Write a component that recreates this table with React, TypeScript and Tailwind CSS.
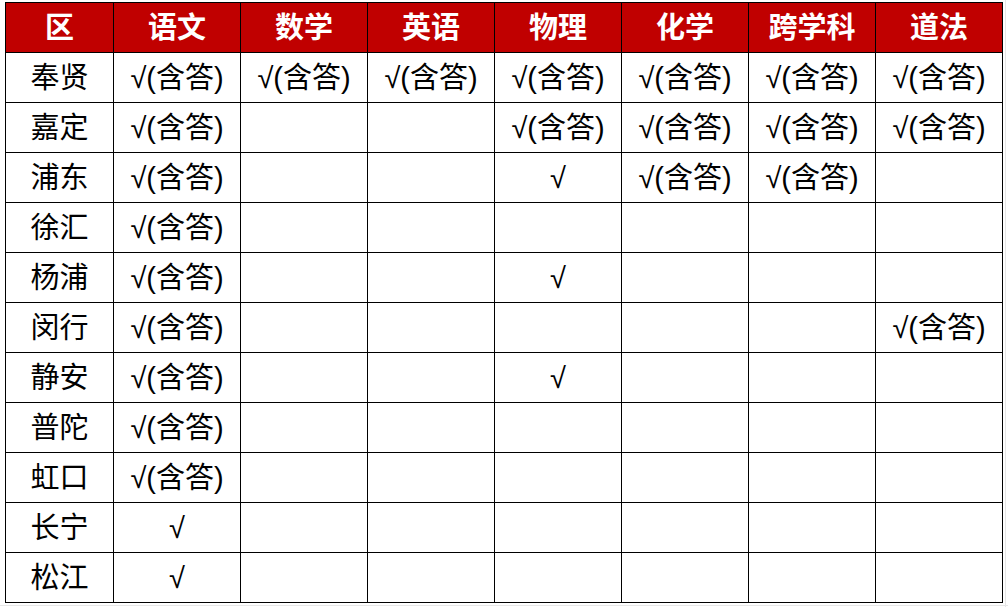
import React from "react";

const headers = ["区", "语文", "数学", "英语", "物理", "化学", "跨学科", "道法"];
const A = "√(含答)";
const C = "√";
const rows: [string, string[]][] = [
  ["奉贤", [A, A, A, A, A, A, A]],
  ["嘉定", [A, "", "", A, A, A, A]],
  ["浦东", [A, "", "", C, A, A, ""]],
  ["徐汇", [A, "", "", "", "", "", ""]],
  ["杨浦", [A, "", "", C, "", "", ""]],
  ["闵行", [A, "", "", "", "", "", A]],
  ["静安", [A, "", "", C, "", "", ""]],
  ["普陀", [A, "", "", "", "", "", ""]],
  ["虹口", [A, "", "", "", "", "", ""]],
  ["长宁", [C, "", "", "", "", "", ""]],
  ["松江", [C, "", "", "", "", "", ""]],
];

const font = { fontFamily: '"Liberation Sans", "Noto Sans CJK SC", sans-serif' };

export default function App() {
  return (
    <div className="relative w-[1008px] h-[607px] bg-white overflow-hidden" style={font}>
      <div className="absolute left-0 top-[605px] w-[1008px] h-px bg-[#e6e6e6]" />
      <div className="absolute left-[1005px] top-0 w-px h-[607px] bg-[#e6e6e6]" />
      <div className="pl-[5px] pt-[2px]">
        <div className="relative grid grid-cols-[108px_repeat(7,127px)] auto-rows-[50px] border-l border-t border-black w-fit">
          {headers.map((h) => (
            <div
              key={h}
              className="flex items-center justify-center pt-[2px] leading-none bg-[#c00000] text-white font-bold text-[29px] border-r border-b border-black"
            >
              {h}
            </div>
          ))}
          {rows.map(([name, vals]) => (
            <React.Fragment key={name}>
              <div className="flex items-center justify-center pt-[2px] leading-none text-black text-[29px] border-r border-b border-black">
                {name}
              </div>
              {vals.map((v, i) => (
                <div
                  key={i}
                  className="flex items-center justify-center pt-[2px] leading-none text-black text-[29px] border-r border-b border-black"
                >
                  {v}
                </div>
              ))}
            </React.Fragment>
          ))}
        </div>
      </div>
    </div>
  );
}
